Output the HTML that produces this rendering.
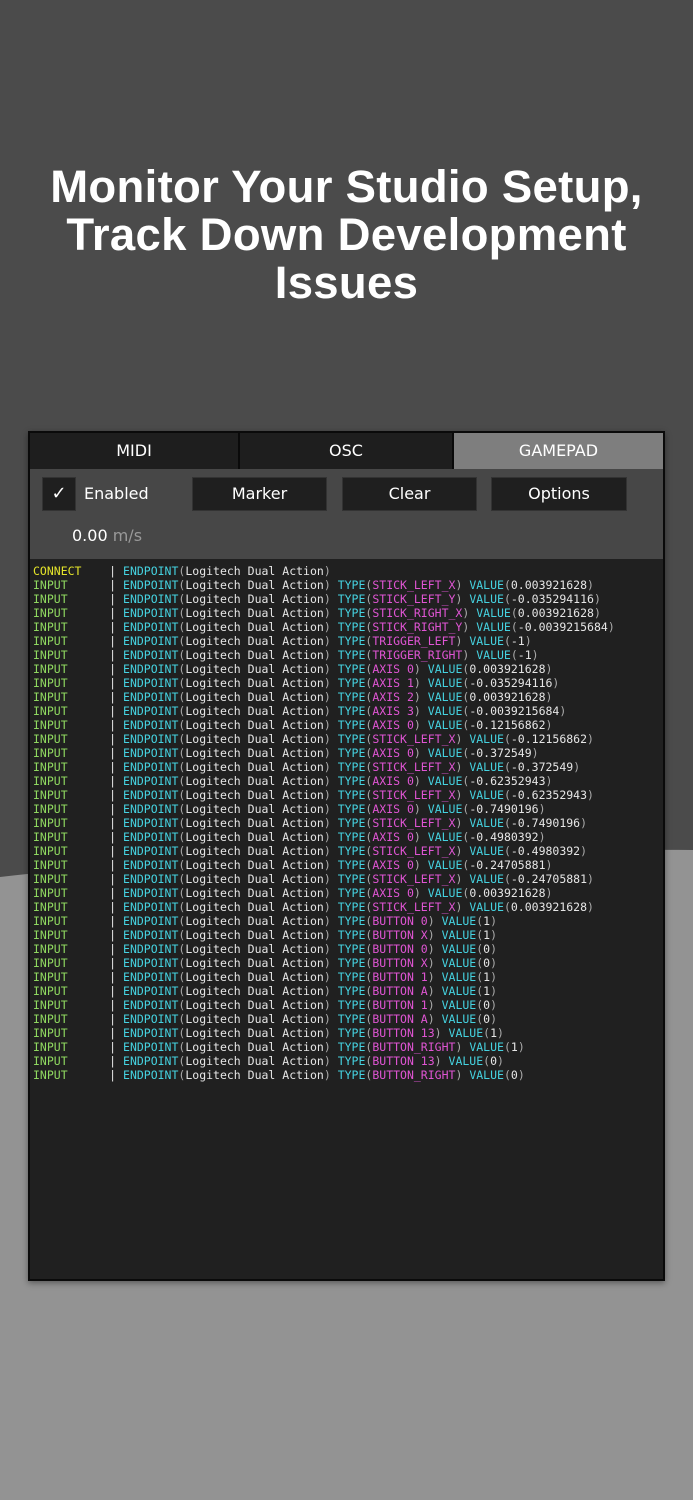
<!DOCTYPE html>
<html><head><meta charset="utf-8"><style>
*{margin:0;padding:0;box-sizing:border-box}
body{width:693px;height:1500px;position:relative;overflow:hidden;background:#4b4b4b;font-family:"Liberation Sans",sans-serif}
#bg{position:absolute;left:0;top:0}
h1{position:absolute;top:163px;left:0;width:693px;text-align:center;color:#fff;font-size:45.5px;line-height:48px;font-weight:bold;letter-spacing:0.3px}
.panel{position:absolute;left:28px;top:431px;width:637px;height:850px;background:#202020;border:2px solid #0a0a0a;box-shadow:0 2px 6px rgba(0,0,0,.4)}
.tabs{position:absolute;left:0;top:0;width:633px;height:36px;background:#1e1e1e;display:flex}
.tab{height:36px;line-height:36px;text-align:center;color:#fff;font-family:"DejaVu Sans",sans-serif;font-size:16px;border-right:2px solid #0a0a0a}
.tool{position:absolute;left:0;top:36px;width:633px;height:90px;background:#474747}
.btn{position:absolute;top:8px;height:34px;background:#1f1f1f;border:1px solid #333;color:#fff;font-family:"DejaVu Sans",sans-serif;font-size:16px;line-height:32px;text-align:center}
.log{position:absolute;left:3px;top:131px;font-family:"DejaVu Sans Mono",monospace;font-size:11.5px;line-height:14px;color:#e6e6e6;white-space:pre}
.y{color:#e4e42a}.g{color:#8fd860}.c{color:#45d2e0}.m{color:#e055d4}.p{color:#aaa}
</style></head><body>
<svg id="bg" width="693" height="1500"><path d="M0 877 C150 860 300 848 693 850 L693 1500 L0 1500Z" fill="#939393"/></svg>
<h1>Monitor Your Studio Setup,<br>Track Down Development<br>Issues</h1>
<div class="panel">
<div class="tabs"><div class="tab" style="width:210px">MIDI</div><div class="tab" style="width:214px">OSC</div><div class="tab" style="width:209px;background:#7e7e7e;border-right:none">GAMEPAD</div></div>
<div class="tool">
<div class="btn" style="left:12px;width:34px;font-size:18px">✓</div>
<div style="position:absolute;left:54px;top:8px;line-height:34px;color:#fff;font-family:'DejaVu Sans',sans-serif;font-size:16px">Enabled</div>
<div class="btn" style="left:162px;width:135px">Marker</div>
<div class="btn" style="left:312px;width:135px">Clear</div>
<div class="btn" style="left:461px;width:136px">Options</div>
<div style="position:absolute;left:42px;top:57px;color:#fff;font-family:'DejaVu Sans',sans-serif;font-size:16px">0.00 <span style="color:#999">m/s</span></div>
</div>
<div class="log"><span class="y">CONNECT</span>    | <span class="c">ENDPOINT</span><span class="p">(</span>Logitech Dual Action<span class="p">)</span>
<span class="g">INPUT</span>      | <span class="c">ENDPOINT</span><span class="p">(</span>Logitech Dual Action<span class="p">)</span> <span class="c">TYPE</span><span class="p">(</span><span class="m">STICK_LEFT_X</span><span class="p">)</span> <span class="c">VALUE</span><span class="p">(</span>0.003921628<span class="p">)</span>
<span class="g">INPUT</span>      | <span class="c">ENDPOINT</span><span class="p">(</span>Logitech Dual Action<span class="p">)</span> <span class="c">TYPE</span><span class="p">(</span><span class="m">STICK_LEFT_Y</span><span class="p">)</span> <span class="c">VALUE</span><span class="p">(</span>-0.035294116<span class="p">)</span>
<span class="g">INPUT</span>      | <span class="c">ENDPOINT</span><span class="p">(</span>Logitech Dual Action<span class="p">)</span> <span class="c">TYPE</span><span class="p">(</span><span class="m">STICK_RIGHT_X</span><span class="p">)</span> <span class="c">VALUE</span><span class="p">(</span>0.003921628<span class="p">)</span>
<span class="g">INPUT</span>      | <span class="c">ENDPOINT</span><span class="p">(</span>Logitech Dual Action<span class="p">)</span> <span class="c">TYPE</span><span class="p">(</span><span class="m">STICK_RIGHT_Y</span><span class="p">)</span> <span class="c">VALUE</span><span class="p">(</span>-0.0039215684<span class="p">)</span>
<span class="g">INPUT</span>      | <span class="c">ENDPOINT</span><span class="p">(</span>Logitech Dual Action<span class="p">)</span> <span class="c">TYPE</span><span class="p">(</span><span class="m">TRIGGER_LEFT</span><span class="p">)</span> <span class="c">VALUE</span><span class="p">(</span>-1<span class="p">)</span>
<span class="g">INPUT</span>      | <span class="c">ENDPOINT</span><span class="p">(</span>Logitech Dual Action<span class="p">)</span> <span class="c">TYPE</span><span class="p">(</span><span class="m">TRIGGER_RIGHT</span><span class="p">)</span> <span class="c">VALUE</span><span class="p">(</span>-1<span class="p">)</span>
<span class="g">INPUT</span>      | <span class="c">ENDPOINT</span><span class="p">(</span>Logitech Dual Action<span class="p">)</span> <span class="c">TYPE</span><span class="p">(</span><span class="m">AXIS 0</span><span class="p">)</span> <span class="c">VALUE</span><span class="p">(</span>0.003921628<span class="p">)</span>
<span class="g">INPUT</span>      | <span class="c">ENDPOINT</span><span class="p">(</span>Logitech Dual Action<span class="p">)</span> <span class="c">TYPE</span><span class="p">(</span><span class="m">AXIS 1</span><span class="p">)</span> <span class="c">VALUE</span><span class="p">(</span>-0.035294116<span class="p">)</span>
<span class="g">INPUT</span>      | <span class="c">ENDPOINT</span><span class="p">(</span>Logitech Dual Action<span class="p">)</span> <span class="c">TYPE</span><span class="p">(</span><span class="m">AXIS 2</span><span class="p">)</span> <span class="c">VALUE</span><span class="p">(</span>0.003921628<span class="p">)</span>
<span class="g">INPUT</span>      | <span class="c">ENDPOINT</span><span class="p">(</span>Logitech Dual Action<span class="p">)</span> <span class="c">TYPE</span><span class="p">(</span><span class="m">AXIS 3</span><span class="p">)</span> <span class="c">VALUE</span><span class="p">(</span>-0.0039215684<span class="p">)</span>
<span class="g">INPUT</span>      | <span class="c">ENDPOINT</span><span class="p">(</span>Logitech Dual Action<span class="p">)</span> <span class="c">TYPE</span><span class="p">(</span><span class="m">AXIS 0</span><span class="p">)</span> <span class="c">VALUE</span><span class="p">(</span>-0.12156862<span class="p">)</span>
<span class="g">INPUT</span>      | <span class="c">ENDPOINT</span><span class="p">(</span>Logitech Dual Action<span class="p">)</span> <span class="c">TYPE</span><span class="p">(</span><span class="m">STICK_LEFT_X</span><span class="p">)</span> <span class="c">VALUE</span><span class="p">(</span>-0.12156862<span class="p">)</span>
<span class="g">INPUT</span>      | <span class="c">ENDPOINT</span><span class="p">(</span>Logitech Dual Action<span class="p">)</span> <span class="c">TYPE</span><span class="p">(</span><span class="m">AXIS 0</span><span class="p">)</span> <span class="c">VALUE</span><span class="p">(</span>-0.372549<span class="p">)</span>
<span class="g">INPUT</span>      | <span class="c">ENDPOINT</span><span class="p">(</span>Logitech Dual Action<span class="p">)</span> <span class="c">TYPE</span><span class="p">(</span><span class="m">STICK_LEFT_X</span><span class="p">)</span> <span class="c">VALUE</span><span class="p">(</span>-0.372549<span class="p">)</span>
<span class="g">INPUT</span>      | <span class="c">ENDPOINT</span><span class="p">(</span>Logitech Dual Action<span class="p">)</span> <span class="c">TYPE</span><span class="p">(</span><span class="m">AXIS 0</span><span class="p">)</span> <span class="c">VALUE</span><span class="p">(</span>-0.62352943<span class="p">)</span>
<span class="g">INPUT</span>      | <span class="c">ENDPOINT</span><span class="p">(</span>Logitech Dual Action<span class="p">)</span> <span class="c">TYPE</span><span class="p">(</span><span class="m">STICK_LEFT_X</span><span class="p">)</span> <span class="c">VALUE</span><span class="p">(</span>-0.62352943<span class="p">)</span>
<span class="g">INPUT</span>      | <span class="c">ENDPOINT</span><span class="p">(</span>Logitech Dual Action<span class="p">)</span> <span class="c">TYPE</span><span class="p">(</span><span class="m">AXIS 0</span><span class="p">)</span> <span class="c">VALUE</span><span class="p">(</span>-0.7490196<span class="p">)</span>
<span class="g">INPUT</span>      | <span class="c">ENDPOINT</span><span class="p">(</span>Logitech Dual Action<span class="p">)</span> <span class="c">TYPE</span><span class="p">(</span><span class="m">STICK_LEFT_X</span><span class="p">)</span> <span class="c">VALUE</span><span class="p">(</span>-0.7490196<span class="p">)</span>
<span class="g">INPUT</span>      | <span class="c">ENDPOINT</span><span class="p">(</span>Logitech Dual Action<span class="p">)</span> <span class="c">TYPE</span><span class="p">(</span><span class="m">AXIS 0</span><span class="p">)</span> <span class="c">VALUE</span><span class="p">(</span>-0.4980392<span class="p">)</span>
<span class="g">INPUT</span>      | <span class="c">ENDPOINT</span><span class="p">(</span>Logitech Dual Action<span class="p">)</span> <span class="c">TYPE</span><span class="p">(</span><span class="m">STICK_LEFT_X</span><span class="p">)</span> <span class="c">VALUE</span><span class="p">(</span>-0.4980392<span class="p">)</span>
<span class="g">INPUT</span>      | <span class="c">ENDPOINT</span><span class="p">(</span>Logitech Dual Action<span class="p">)</span> <span class="c">TYPE</span><span class="p">(</span><span class="m">AXIS 0</span><span class="p">)</span> <span class="c">VALUE</span><span class="p">(</span>-0.24705881<span class="p">)</span>
<span class="g">INPUT</span>      | <span class="c">ENDPOINT</span><span class="p">(</span>Logitech Dual Action<span class="p">)</span> <span class="c">TYPE</span><span class="p">(</span><span class="m">STICK_LEFT_X</span><span class="p">)</span> <span class="c">VALUE</span><span class="p">(</span>-0.24705881<span class="p">)</span>
<span class="g">INPUT</span>      | <span class="c">ENDPOINT</span><span class="p">(</span>Logitech Dual Action<span class="p">)</span> <span class="c">TYPE</span><span class="p">(</span><span class="m">AXIS 0</span><span class="p">)</span> <span class="c">VALUE</span><span class="p">(</span>0.003921628<span class="p">)</span>
<span class="g">INPUT</span>      | <span class="c">ENDPOINT</span><span class="p">(</span>Logitech Dual Action<span class="p">)</span> <span class="c">TYPE</span><span class="p">(</span><span class="m">STICK_LEFT_X</span><span class="p">)</span> <span class="c">VALUE</span><span class="p">(</span>0.003921628<span class="p">)</span>
<span class="g">INPUT</span>      | <span class="c">ENDPOINT</span><span class="p">(</span>Logitech Dual Action<span class="p">)</span> <span class="c">TYPE</span><span class="p">(</span><span class="m">BUTTON 0</span><span class="p">)</span> <span class="c">VALUE</span><span class="p">(</span>1<span class="p">)</span>
<span class="g">INPUT</span>      | <span class="c">ENDPOINT</span><span class="p">(</span>Logitech Dual Action<span class="p">)</span> <span class="c">TYPE</span><span class="p">(</span><span class="m">BUTTON X</span><span class="p">)</span> <span class="c">VALUE</span><span class="p">(</span>1<span class="p">)</span>
<span class="g">INPUT</span>      | <span class="c">ENDPOINT</span><span class="p">(</span>Logitech Dual Action<span class="p">)</span> <span class="c">TYPE</span><span class="p">(</span><span class="m">BUTTON 0</span><span class="p">)</span> <span class="c">VALUE</span><span class="p">(</span>0<span class="p">)</span>
<span class="g">INPUT</span>      | <span class="c">ENDPOINT</span><span class="p">(</span>Logitech Dual Action<span class="p">)</span> <span class="c">TYPE</span><span class="p">(</span><span class="m">BUTTON X</span><span class="p">)</span> <span class="c">VALUE</span><span class="p">(</span>0<span class="p">)</span>
<span class="g">INPUT</span>      | <span class="c">ENDPOINT</span><span class="p">(</span>Logitech Dual Action<span class="p">)</span> <span class="c">TYPE</span><span class="p">(</span><span class="m">BUTTON 1</span><span class="p">)</span> <span class="c">VALUE</span><span class="p">(</span>1<span class="p">)</span>
<span class="g">INPUT</span>      | <span class="c">ENDPOINT</span><span class="p">(</span>Logitech Dual Action<span class="p">)</span> <span class="c">TYPE</span><span class="p">(</span><span class="m">BUTTON A</span><span class="p">)</span> <span class="c">VALUE</span><span class="p">(</span>1<span class="p">)</span>
<span class="g">INPUT</span>      | <span class="c">ENDPOINT</span><span class="p">(</span>Logitech Dual Action<span class="p">)</span> <span class="c">TYPE</span><span class="p">(</span><span class="m">BUTTON 1</span><span class="p">)</span> <span class="c">VALUE</span><span class="p">(</span>0<span class="p">)</span>
<span class="g">INPUT</span>      | <span class="c">ENDPOINT</span><span class="p">(</span>Logitech Dual Action<span class="p">)</span> <span class="c">TYPE</span><span class="p">(</span><span class="m">BUTTON A</span><span class="p">)</span> <span class="c">VALUE</span><span class="p">(</span>0<span class="p">)</span>
<span class="g">INPUT</span>      | <span class="c">ENDPOINT</span><span class="p">(</span>Logitech Dual Action<span class="p">)</span> <span class="c">TYPE</span><span class="p">(</span><span class="m">BUTTON 13</span><span class="p">)</span> <span class="c">VALUE</span><span class="p">(</span>1<span class="p">)</span>
<span class="g">INPUT</span>      | <span class="c">ENDPOINT</span><span class="p">(</span>Logitech Dual Action<span class="p">)</span> <span class="c">TYPE</span><span class="p">(</span><span class="m">BUTTON_RIGHT</span><span class="p">)</span> <span class="c">VALUE</span><span class="p">(</span>1<span class="p">)</span>
<span class="g">INPUT</span>      | <span class="c">ENDPOINT</span><span class="p">(</span>Logitech Dual Action<span class="p">)</span> <span class="c">TYPE</span><span class="p">(</span><span class="m">BUTTON 13</span><span class="p">)</span> <span class="c">VALUE</span><span class="p">(</span>0<span class="p">)</span>
<span class="g">INPUT</span>      | <span class="c">ENDPOINT</span><span class="p">(</span>Logitech Dual Action<span class="p">)</span> <span class="c">TYPE</span><span class="p">(</span><span class="m">BUTTON_RIGHT</span><span class="p">)</span> <span class="c">VALUE</span><span class="p">(</span>0<span class="p">)</span></div>
</div>
</body></html>
